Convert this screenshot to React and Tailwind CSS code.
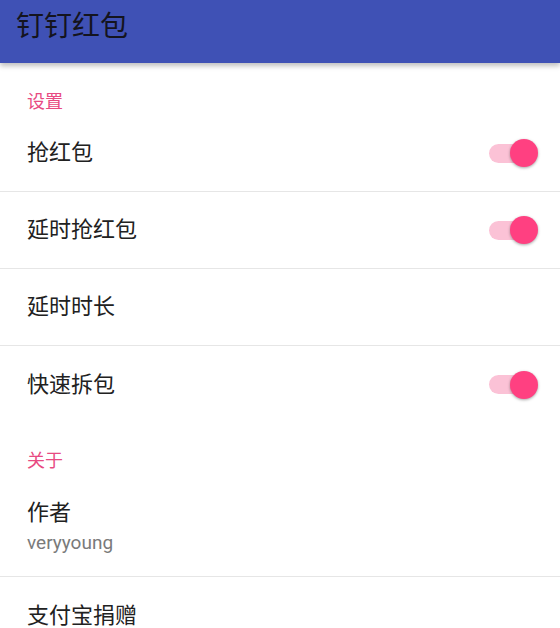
import React, { useState } from 'react';

const font = { fontFamily: '"Roboto", "Noto Sans CJK SC", sans-serif' };

function Toggle({ on, onChange }) {
  return (
    <button
      onClick={onChange}
      className="relative w-[52px] h-[30px] flex items-center"
    >
      <span
        className={`absolute left-[1px] w-[42px] h-[19px] rounded-full ${on ? 'bg-[#FBC2D6]' : 'bg-[#BDBDBD]'}`}
      />
      <span
        className={`absolute top-[1px] w-[28px] h-[28px] rounded-full shadow-[0_1px_3px_rgba(0,0,0,0.35)] ${on ? 'left-[22px] bg-[#FF4081]' : 'left-0 bg-[#FAFAFA]'}`}
      />
    </button>
  );
}

function SectionLabel({ children, top }) {
  return (
    <div className={`px-[27px] ${top} pb-[3px] text-[18px] leading-[20px] text-[#E84A82]`}>
      {children}
    </div>
  );
}

function Row({ title, summary, toggle, divider = true }) {
  return (
    <div className={`flex items-center justify-between pl-[27px] pr-[20px] ${summary ? 'h-[103px] pt-[4px]' : 'h-[77px]'} ${divider ? 'border-b border-[#E6E6E6]' : ''}`}>
      <div className="flex flex-col">
        <span className="text-[22px] leading-[30px] text-[#212121]">{title}</span>
        {summary && <span className="text-[19px] leading-[26px] text-[#7A7A7A] mt-[2px]">{summary}</span>}
      </div>
      {toggle}
    </div>
  );
}

export default function App() {
  const [grab, setGrab] = useState(true);
  const [delay, setDelay] = useState(true);
  const [fast, setFast] = useState(true);

  return (
    <div className="w-[560px] h-[628px] overflow-hidden bg-white" style={font}>
      <header className="relative z-10 h-[63px] bg-[#3F51B5] pl-[16px] pt-[10px] shadow-[0_3px_5px_rgba(0,0,0,0.25)]">
        <h1 className="text-[28px] leading-[34px] text-[#14141e]">钉钉红包</h1>
      </header>

      <SectionLabel top="pt-[29px]">设置</SectionLabel>
      <Row title="抢红包" toggle={<Toggle on={grab} onChange={() => setGrab(!grab)} />} />
      <Row title="延时抢红包" toggle={<Toggle on={delay} onChange={() => setDelay(!delay)} />} />
      <Row title="延时时长" />
      <Row title="快速拆包" divider={false} toggle={<Toggle on={fast} onChange={() => setFast(!fast)} />} />

      <SectionLabel top="pt-[28px]">关于</SectionLabel>
      <Row title="作者" summary="veryyoung" />
      <Row title="支付宝捐赠" divider={false} />
    </div>
  );
}
